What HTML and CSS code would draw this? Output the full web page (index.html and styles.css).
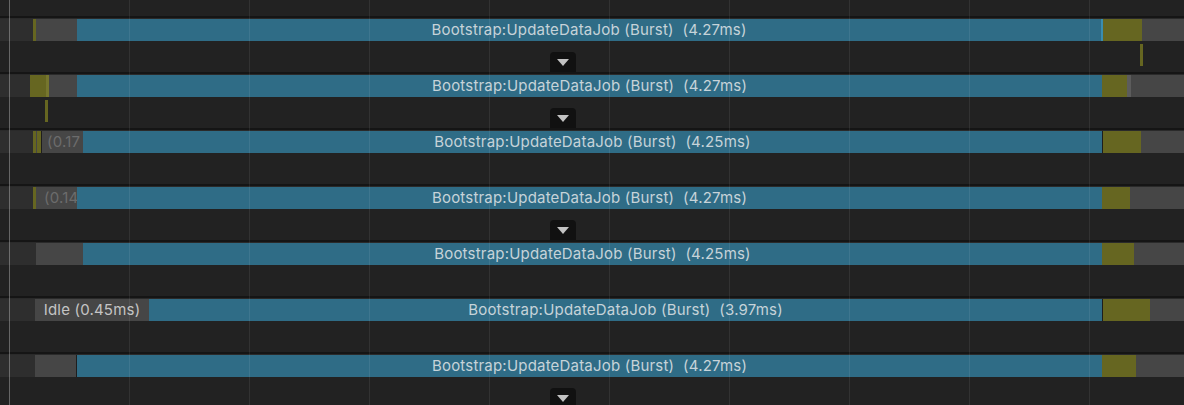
FILE: index.html
```html
<!DOCTYPE html>
<html lang="en">
<head>
    <meta charset="UTF-8">
    <title>Profiler Timeline</title>
    <link rel="stylesheet" href="styles.css">
</head>
<body>
    <div class="timeline">
        <div class="top-space"></div>

        <div class="track">
            <div class="bar">
                <span class="seg dark" style="width:33px"></span>
                <span class="seg sync" style="width:3px"></span>
                <span class="seg idle" style="width:41px"></span>
                <span class="seg job" style="width:1024px">Bootstrap:UpdateDataJob (Burst) &nbsp;(4.27ms)</span>
                <span class="seg job-edge" style="width:2px"></span>
                <span class="seg sync" style="width:39px"></span>
                <span class="seg idle rest"></span>
            </div>
            <span class="tick" style="left:1140px"></span>
            <div class="expand"></div>
        </div>

        <div class="track">
            <div class="bar">
                <span class="seg dark" style="width:30px"></span>
                <span class="seg sync" style="width:16px"></span>
                <span class="seg sync-light" style="width:3px"></span>
                <span class="seg idle" style="width:28px"></span>
                <span class="seg job" style="width:1025px">Bootstrap:UpdateDataJob (Burst) &nbsp;(4.27ms)</span>
                <span class="seg sync" style="width:25px"></span>
                <span class="seg pale" style="width:4px"></span>
                <span class="seg idle rest"></span>
            </div>
            <span class="tick" style="left:45px"></span>
            <div class="expand"></div>
        </div>

        <div class="track">
            <div class="bar">
                <span class="seg dark" style="width:33px"></span>
                <span class="seg sync" style="width:3px"></span>
                <span class="seg idle" style="width:1px"></span>
                <span class="seg sync" style="width:4px"></span>
                <span class="seg line" style="width:1px"></span>
                <span class="seg idle dim" style="width:41px">(0.17</span>
                <span class="seg job" style="width:1019px">Bootstrap:UpdateDataJob (Burst) &nbsp;(4.25ms)</span>
                <span class="seg line" style="width:1px"></span>
                <span class="seg sync" style="width:38px"></span>
                <span class="seg idle rest"></span>
            </div>
        </div>

        <div class="track">
            <div class="bar">
                <span class="seg dark" style="width:33px"></span>
                <span class="seg sync" style="width:3px"></span>
                <span class="seg idle dim wide" style="width:41px">(0.14</span>
                <span class="seg job" style="width:1025px">Bootstrap:UpdateDataJob (Burst) &nbsp;(4.27ms)</span>
                <span class="seg sync" style="width:28px"></span>
                <span class="seg idle rest"></span>
            </div>
            <div class="expand"></div>
        </div>

        <div class="track">
            <div class="bar">
                <span class="seg dark" style="width:36px"></span>
                <span class="seg idle" style="width:47px"></span>
                <span class="seg job" style="width:1019px">Bootstrap:UpdateDataJob (Burst) &nbsp;(4.25ms)</span>
                <span class="seg sync" style="width:32px"></span>
                <span class="seg idle rest"></span>
            </div>
        </div>

        <div class="track">
            <div class="bar">
                <span class="seg dark" style="width:35px"></span>
                <span class="seg idle label" style="width:114px">Idle (0.45ms)</span>
                <span class="seg job" style="width:953px">Bootstrap:UpdateDataJob (Burst) &nbsp;(3.97ms)</span>
                <span class="seg line" style="width:1px"></span>
                <span class="seg sync" style="width:47px"></span>
                <span class="seg idle rest"></span>
            </div>
        </div>

        <div class="track">
            <div class="bar">
                <span class="seg dark" style="width:35px"></span>
                <span class="seg idle" style="width:41px"></span>
                <span class="seg line" style="width:1px"></span>
                <span class="seg job" style="width:1025px">Bootstrap:UpdateDataJob (Burst) &nbsp;(4.27ms)</span>
                <span class="seg sync" style="width:34px"></span>
                <span class="seg idle rest"></span>
            </div>
            <div class="expand"></div>
        </div>

        <div class="grid"></div>
        <div class="cursor"></div>
    </div>
</body>
</html>
```

FILE: styles.css
```css
* {
    margin: 0;
    padding: 0;
    box-sizing: border-box;
}

html, body {
    height: 100%;
    overflow: hidden;
}

body {
    background: #222222;
    font-family: 'Inter', 'Noto Sans', sans-serif;
    font-size: 15px;
    letter-spacing: 0.2px;
}

.timeline {
    position: relative;
    height: 405px;
    overflow: hidden;
}

.top-space {
    height: 16px;
}

.track {
    position: relative;
    height: 56px;
    border-top: 2px solid #151515;
    background: #222222;
}

.track::before {
    content: '';
    display: block;
    height: 1px;
    background: #2a2a2a;
}

.bar {
    display: flex;
    height: 22px;
}

.seg {
    flex: none;
    height: 100%;
    line-height: 22px;
    white-space: nowrap;
    overflow: hidden;
}

.rest {
    flex: 1;
}

.dark {
    background: #2e2e2e;
}

.idle {
    background: #464646;
}

.pale {
    background: #5c5c5c;
}

.sync {
    background: #666621;
}

.sync-light {
    background: #76762e;
}

.line {
    background: #1e1e1e;
}

.job {
    background: #2f6c86;
    color: #c6d3d9;
    text-align: center;
}

.job-edge {
    background: #3a8db0;
}

.label {
    color: #c4c4c4;
    text-align: center;
}

.dim {
    color: #6c6c6c;
    padding-left: 5px;
}

.dim.wide {
    padding-left: 8px;
}

.tick {
    position: absolute;
    top: 26px;
    width: 3px;
    height: 22px;
    background: #666621;
}

.expand {
    position: absolute;
    left: 550px;
    bottom: 0;
    width: 26px;
    height: 20px;
    background: #111111;
    border-radius: 4px 4px 0 0;
    display: flex;
    align-items: center;
    justify-content: center;
}

.expand::after {
    content: '';
    border-left: 6px solid transparent;
    border-right: 6px solid transparent;
    border-top: 7px solid #c2c2c2;
}

.grid {
    position: absolute;
    inset: 0;
    pointer-events: none;
    background-image: linear-gradient(to right, rgba(255, 255, 255, 0.07) 1px, transparent 1px);
    background-size: 120px 100%;
    background-position: 9px 0;
}

.cursor {
    position: absolute;
    top: 0;
    bottom: 0;
    left: 9px;
    width: 1px;
    background: rgba(200, 200, 200, 0.35);
    pointer-events: none;
}
```
